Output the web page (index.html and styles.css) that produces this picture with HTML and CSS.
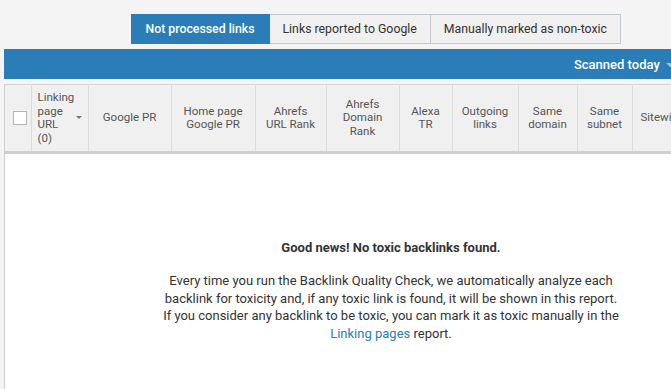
FILE: index.html
```html
<!DOCTYPE html>
<html lang="en">
<head>
    <meta charset="UTF-8">
    <title>Backlink Audit - Toxic links</title>
    <link rel="stylesheet" href="styles.css">
</head>
<body>

    <!-- Tabs -->
    <div class="tabs">
        <button class="tab active">Not processed links</button>
        <button class="tab">Links reported to Google</button>
        <button class="tab">Manually marked as non-toxic</button>
    </div>

    <!-- Blue toolbar -->
    <div class="toolbar">
        <span class="filter">Scanned today <span class="caret"></span></span>
    </div>

    <!-- Table -->
    <div class="report">
        <table class="grid">
            <colgroup>
                <col style="width:26px">
                <col style="width:57px">
                <col style="width:83px">
                <col style="width:84px">
                <col style="width:71px">
                <col style="width:73px">
                <col style="width:53px">
                <col style="width:66px">
                <col style="width:59px">
                <col style="width:55px">
                <col style="width:80px">
            </colgroup>
            <thead>
                <tr>
                    <th><span class="checkbox"></span></th>
                    <th class="sortable">Linking page URL (0)<span class="sort-caret"></span></th>
                    <th>Google PR</th>
                    <th>Home page Google PR</th>
                    <th>Ahrefs URL Rank</th>
                    <th>Ahrefs Domain Rank</th>
                    <th>Alexa TR</th>
                    <th>Outgoing links</th>
                    <th>Same domain</th>
                    <th>Same subnet</th>
                    <th class="left">Sitewide</th>
                </tr>
            </thead>
        </table>

        <div class="empty">
            <div class="empty-title">Good news! No toxic backlinks found.</div>
            <p class="empty-text">
                Every time you run the Backlink Quality Check, we automatically analyze each
                backlink for toxicity and, if any toxic link is found, it will be shown in this report.
                If you consider any backlink to be toxic, you can mark it as toxic manually in the
                <a href="#">Linking pages</a> report.
            </p>
        </div>
    </div>

</body>
</html>
```

FILE: styles.css
```css
/* General */
body {
    margin: 0;
    background-color: #f4f4f4;
    font-family: Roboto, "Liberation Sans", Arial, sans-serif;
    color: #333;
    overflow: hidden;
    height: 389px;
}

/* Tabs */
.tabs {
    display: flex;
    justify-content: flex-end;
    padding: 14px 50px 0 0;
    margin-bottom: 5px;
}

.tab {
    height: 30px;
    padding: 0 13px;
    border: 1px solid #c3c8ce;
    border-left: none;
    background-color: #f0f0f0;
    color: #333;
    font-family: inherit;
    font-size: 12.3px;
    cursor: pointer;
}

.tab.active {
    background-color: #2a7db6;
    border-color: #2a7db6;
    color: white;
    font-weight: 500;
    padding: 0 14px;
}

/* Blue toolbar */
.toolbar {
    margin-left: 4px;
    height: 30px;
    background-color: #2a7db6;
    display: flex;
    align-items: center;
    justify-content: flex-end;
    overflow: hidden;
}

.filter {
    color: white;
    font-size: 13px;
    font-weight: 500;
    white-space: nowrap;
    margin-right: -3px;
}

.caret {
    display: inline-block;
    margin-left: 3px;
    vertical-align: middle;
    border-left: 4px solid transparent;
    border-right: 4px solid transparent;
    border-top: 4px solid #9dc3e0;
}

/* Report table */
.report {
    margin-top: 5px;
    margin-left: 4px;
    border-left: 1px solid #cfcfcf;
    background-color: white;
    height: 305px;
    overflow: hidden;
}

.grid {
    border-collapse: collapse;
    table-layout: fixed;
    width: 707px;
}

.grid th {
    height: 66px;
    padding: 0 8px;
    background-color: #f0f0f0;
    border-top: 1px solid #d6d6d6;
    border-right: 1px solid #dcdcdc;
    border-bottom: 3px solid #cfcfcf;
    color: #555;
    font-size: 11.5px;
    font-weight: normal;
    line-height: 13.5px;
    text-align: center;
}

.grid th.sortable {
    position: relative;
    text-align: left;
    padding: 0 14px 0 6px;
}

.grid th.left {
    text-align: left;
}

.sort-caret {
    position: absolute;
    right: 6px;
    top: 31px;
    border-left: 3px solid transparent;
    border-right: 3px solid transparent;
    border-top: 3px solid #777;
}

.checkbox {
    display: block;
    width: 12px;
    height: 12px;
    margin: 0 auto;
    border: 1px solid #b5b5b5;
    background-color: white;
}

/* Empty state */
.empty {
    width: 772px;
    text-align: center;
    padding-top: 86px;
}

.empty-title {
    font-size: 13px;
    font-weight: bold;
    color: #333;
}

.empty-text {
    width: 460px;
    margin: 17px auto 0;
    font-size: 13px;
    line-height: 17.6px;
    color: #333;
}

.empty-text a {
    color: #2a7db6;
    text-decoration: none;
}
```
